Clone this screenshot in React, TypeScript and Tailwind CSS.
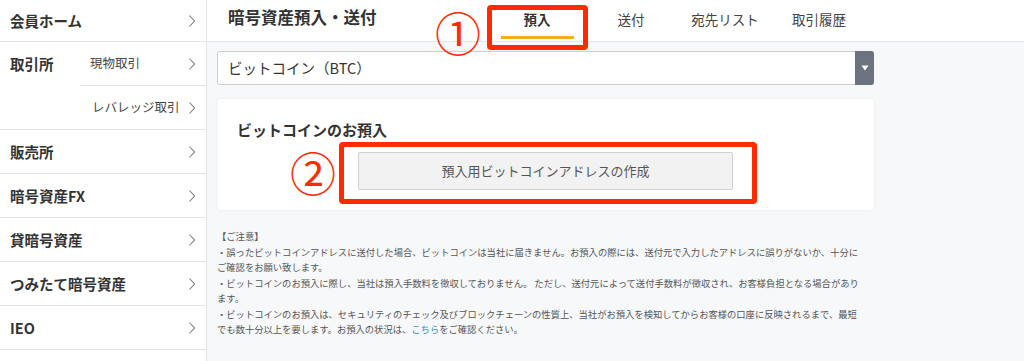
import React from 'react'

const menu = [
  { label: '販売所' },
  { label: '暗号資産FX' },
  { label: '貸暗号資産' },
  { label: 'つみたて暗号資産' },
  { label: 'IEO' },
]

const tabs = ['預入', '送付', '宛先リスト', '取引履歴']

function Chevron() {
  return (
    <svg width="8" height="14" viewBox="0 0 8 14" className="shrink-0">
      <polyline points="1.5,1.5 6.5,7 1.5,12.5" fill="none" stroke="#7a7a7a" strokeWidth="1.1" />
    </svg>
  )
}

function Sidebar() {
  return (
    <aside className="w-[207px] shrink-0 bg-white border-r border-[#e4e4e4] text-[#333]">
      <div className="h-[42px] flex items-center justify-between pl-[10px] pr-[10px] border-b border-[#e4e4e4]">
        <span className="text-[14.5px] font-bold">会員ホーム</span>
        <Chevron />
      </div>
      {/* 取引所 */}
      <div className="flex border-b border-[#e4e4e4]">
        <div className="w-[80px] pl-[10px] pt-[11px] text-[14.5px] font-bold">取引所</div>
        <div className="flex-1">
          <div className="h-[44px] flex items-center justify-between pl-[10px] pr-[10px] border-b border-[#e4e4e4]">
            <span className="text-[12.5px] text-[#444]">現物取引</span>
            <Chevron />
          </div>
          <div className="h-[43px] flex items-center justify-between pl-[12px] pr-[10px]">
            <span className="text-[12.5px] text-[#444]">レバレッジ取引</span>
            <Chevron />
          </div>
        </div>
      </div>
      {menu.map((m) => (
        <div
          key={m.label}
          className="h-[44px] flex items-center justify-between pl-[10px] pr-[10px] border-b border-[#e4e4e4]"
        >
          <span className="text-[14.5px] font-bold">{m.label}</span>
          <Chevron />
        </div>
      ))}
    </aside>
  )
}

function Header() {
  return (
    <div className="h-[42px] flex bg-white border-b border-[#e6e6e6]">
      <div className="w-[283px] pl-[21px] pt-[5px] text-[16.5px] font-bold text-[#333]">暗号資産預入・送付</div>
      <div className="flex">
        {tabs.map((t, i) => (
          <div key={t} className="w-[94px] flex flex-col items-center">
            <span className={`pt-[9px] text-[13.5px] leading-[20px] ${i === 0 ? 'font-bold text-[#333]' : 'text-[#444]'}`}>
              {t}
            </span>
            {i === 0 && <div className="mt-auto mb-[2px] w-[73px] h-[3px] bg-[#f6ad1c]" />}
          </div>
        ))}
      </div>
    </div>
  )
}

function Notes() {
  const lines = [
    '【ご注意】',
    '・誤ったビットコインアドレスに送付した場合、ビットコインは当社に届きません。お預入の際には、送付元で入力したアドレスに誤りがないか、十分に',
    'ご確認をお願い致します。',
    '・ビットコインのお預入に際し、当社は預入手数料を徴収しておりません。 ただし、送付元によって送付手数料が徴収され、お客様負担となる場合があり',
    'ます。',
    '・ビットコインのお預入は、セキュリティのチェック及びブロックチェーンの性質上、当社がお預入を検知してからお客様の口座に反映されるまで、最短',
  ]
  return (
    <div className="mt-[19px] text-[9.3px] leading-[15.5px] text-[#555] whitespace-nowrap">
      {lines.map((l) => (
        <div key={l}>{l}</div>
      ))}
      <div>
        でも数十分以上を要します。お預入の状況は、<span className="text-[#3b8fc8]">こちら</span>をご確認ください。
      </div>
    </div>
  )
}

export default function App() {
  return (
    <div className="relative w-[1024px] h-[361px] overflow-hidden flex bg-[#f7f8fa] font-['Noto_Sans_CJK_JP','Noto_Sans',sans-serif]">
      <Sidebar />
      <main className="flex-1">
        <Header />
        <div className="pl-[10px] pt-[9px] w-[667px]">
          {/* select */}
          <div className="h-[34px] flex bg-white border border-[#cfcfcf] rounded-[3px]">
            <div className="flex-1 flex items-center pl-[10px] text-[14.5px] text-[#333]">ビットコイン（BTC）</div>
            <div className="w-[19px] -my-px -mr-px rounded-r-[3px] bg-[#6c737e] flex items-center justify-center">
              <svg width="8" height="6" viewBox="0 0 8 6">
                <polygon points="0.5,0.5 7.5,0.5 4,5.5" fill="#fff" />
              </svg>
            </div>
          </div>
          {/* card */}
          <div className="mt-[14px] bg-white rounded-[3px] shadow-[0_0_3px_rgba(0,0,0,0.08)] pt-[21px] pb-[20px]">
            <div className="pl-[20px] text-[15px] leading-[20px] font-bold text-[#333]">ビットコインのお預入</div>
            <div className="mt-[12px] flex justify-center">
              <button className="w-[375px] h-[38px] bg-[#f2f2f2] border border-[#d0d0d0] rounded-[2px] text-[13px] text-[#555]">
                預入用ビットコインアドレスの作成
              </button>
            </div>
          </div>
          <Notes />
        </div>
      </main>

      {/* annotations */}
      <div className="absolute left-[487px] top-[5px] w-[101px] h-[45px] border-[5px] border-[#ff2a00] rounded-[4px]" />
      <div className="absolute left-[339px] top-[142px] w-[418px] h-[62px] border-[5px] border-[#ff2a00] rounded-[4px]" />
      <div className="absolute left-[433px] top-[4px] w-[50px] h-[54px] text-center text-[46px] leading-[54px] text-[#ff2a00]">①</div>
      <div className="absolute left-[288px] top-[144px] w-[50px] h-[54px] text-center text-[46px] leading-[54px] text-[#ff2a00]">②</div>
    </div>
  )
}
